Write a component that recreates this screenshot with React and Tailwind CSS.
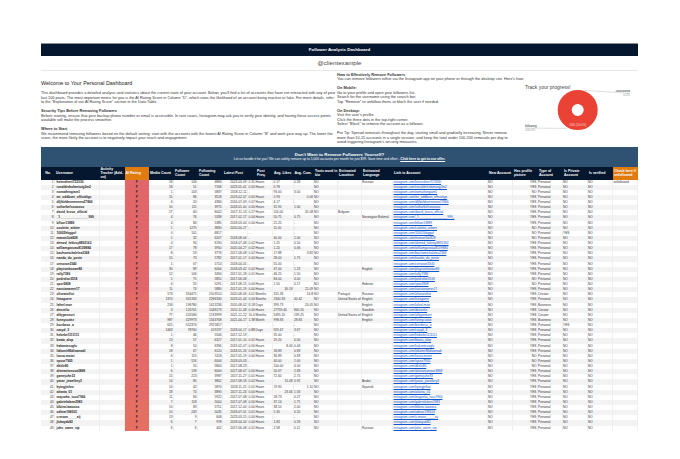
const cols =
  "grid grid-cols-[14px_44.5px_25px_24.5px_25px_24px_25px_25px_25px_20.5px_20.5px_24px_24px_31px_95px_25px_25px_25px_25px_25px_25px]";

const headers = [
  "No.",
  "Username",
  "Activity Tracker (Add-on)",
  "AI Rating",
  "Media Count",
  "Follower Count",
  "Following Count",
  "Latest Post",
  "Post Freq.",
  "Avg. Likes",
  "Avg. Com.",
  "Toxic word in bio",
  "Estimated Location",
  "Estimated Language",
  "Link to Account",
  "New Account",
  "Has profile picture",
  "Type of Account",
  "Is Private Account",
  "Is verified",
  "Check here if unfollowed",
];

// user|media|followers|following|date|freq|likes|com|location|language|hasPic|type|private
// a leading > means the value sits on the right of its cell
const raw = [
  "heinrafeeri723330|18|106|4866|2023-03-09|0.31 Hours|0.17|0.33|-|Russian|YES|Personal|NO",
  "ronaldinhofamtoig3m2|18|51|7168|2023-05-01|0.00 Hours|0.78|-|||YES|Personal|NO",
  "nomathingiam1|1|103|5837|2018-12-11|-|93.00|3.00|||NO|Personal|NO",
  "mr_oddboet_officialigs|15|86|3518|2023-02-07|0.00 Hours|0.93|>0.06|||YES|Personal|NO",
  "dfjfdzfdnnnnnnnn27866|6|20|4384|2016-07-09|0.07 Hours|4.17|-|||YES|Personal|NO",
  "sofiartkelsoooooo|10|111|3975|2018-01-00|0.00 Hours|31.90|1.00|||YES|Personal|NO",
  "david_kruva_official|17|60|6052|2017-11-13|0.27 Hours|116.00|>31.08|Belgium||YES|Personal|NO",
  "_1________________999_|4|76|5338|2017-02-17|0.00 Hours|50.75|0.75||Norwegian Bokmål|YES|Personal|NO",
  "bfloor13889|4|84|5385|2018-03-04|0.00 Hours|21.25|-|||YES|Personal|NO",
  "coolnite_arbiee|1|1275|3830|2020-04-27|-|11.00|-|||NO|Personal|NO",
  "10005hkggof|0|101|6817||-|-|-|||NO|Personal|YES",
  "manan3ok828|1|32|6207|2018-08-04|-|40.00|2.00|||NO|Personal|NO",
  "ahmed_fakiroy8892162|4|94|6190|2018-07-08|0.02 Hours|1.25|0.50|||YES|Personal|NO",
  "williamgonzao8139884|17|78|3950|2020-04-27|0.02 Hours|1.20|0.06|||YES|Personal|NO",
  "bachomichalelea2368|8|53|3776|2017-08-08|0.02 Hours|17.88|>3.82|||YES|Personal|NO",
  "nando_do_poste|15|73|5782|2017-01-17|0.00 Hours|28.00|1.75|||YES|Personal|NO",
  "cenovoe3340|1|67|5714|2018-04-01|-|55.00|-|||YES|Personal|NO",
  "playeonkoowe86|30|89|6064|2018-03-02|0.02 Hours|47.00|1.23||English|YES|Personal|NO",
  "rally7386|12|106|3494|2017-01-18|0.01 Hours|46.25|1.50|||YES|Personal|NO",
  "pedrofox3518|1|75|5855|2017-06-08|-|84.00|4.00|||NO|Personal|NO",
  "spor5808|6|55|5291|2017-08-15|0.00 Hours|1.50|0.17||Hebrew|NO|Personal|NO",
  "nassianamer17|11|74|5880|2017-01-19|0.00 Hours|>30.18|>21.09|||YES|Personal|NO",
  "oliveatofitsi|573|354471|1503510|2020-08-06|4.01 Months|315.33|>14.8|Portugal|Russian|YES|Creator|NO",
  "listogoere|1370|341333|2286330|2023-01-04|0.00 Months|2340.33|40.42|United States of A|English|YES|Personal|NO",
  "lafeel.moe|234|196780|1413236|2020-08-02|8.18 Days|393.73|>24.05||English|YES|Business|NO",
  "denzelio|3|126701|1048173|2012-11-08|0.00 Hours|27759.40|840.20||Swedish|YES|Creator|NO",
  "alltypesnort|77|241580|1743999|2021-12-22|10.0 Months|5495.20|139.25|United States of A|English|YES|Creator|NO",
  "funnycutiez|987|429973|1563768|2021-04-17|1.38 Month|998.83|28.83||English|YES|Business|NO",
  "burrbeca_a|625|552374|2921817||-|-|-|||YES|Personal|YES",
  "cacyd_3|1463|78760|419197|2018-04-17|0.88 Days|925.67|3.67|||YES|Personal|NO",
  "hebebe1111111|1|46|5506|2017-12-19|-|35.00|-|||YES|Personal|NO",
  "beata_alop|13|57|6327|2017-01-10|0.01 Hours|19.20|0.00|||YES|Personal|NO",
  "hakantezoglu|8|50|6396|2019-02-07|0.00 Hours|>8.44|0.44|||YES|Personal|NO",
  "lidiomir86dlownadi|18|67|6120|2018-01-26|0.00 Hours|18.83|0.83|||YES|Personal|NO",
  "lousa.motot|6|115|5118|2017-05-19|0.00 Hours|36.83|0.83|||NO|Personal|NO",
  "spuur7905|1|516|6004|2018-03-03|-|40.00|1.00|||NO|Personal|NO",
  "dkitle80|1|55|5800|2017-08-23|-|100.00|4.00|||NO|Personal|NO",
  "alineantonova3868|6|139|6000|2017-08-07|0.00 Hours|50.67|2.83|||YES|Personal|NO",
  "gamejuhe33|15|213|3987|2017-11-27|0.01 Hours|72.60|2.75|||YES|Personal|NO",
  "yasar_jewellery3|14|85|3802|2017-08-18|0.02 Hours|>15.08|0.92||Arabic|YES|Personal|NO",
  "hyingjinfoo|10|42|5870|2018-11-21|0.01 Hours|19.90|>1.10||Spanish|YES|Personal|NO",
  "atlanta_01|18|74|3890|2017-11-24|0.00 Hours|>23.06|1.56|||YES|Personal|NO",
  "mayorka_tuco7966|11|84|5922|2017-07-08|0.00 Hours|18.73|0.27|||YES|Personal|NO",
  "gabrielalann2983|7|118|5000|2017-07-08|0.00 Hours|37.14|1.71|||YES|Personal|NO",
  "blbiea.lawooca|10|83|5751|2017-12-00|0.00 Hours|38.10|2.00|||YES|Personal|NO",
  "odinar198103|10|243|5035|2018-07-01|0.01 Hours|5.30|0.20|||YES|Personal|NO",
  "u.moon_____aij|13|9|608|2023-03-15|0.00 Hours|-|-|||YES|Personal|NO",
  "jlokayab82|6|7|978|2018-04-04|0.00 Hours|1.83|0.33|||YES|Personal|NO",
  "john_owen_vip|6|6|402|2017-06-08|0.01 Hours|2.58|0.11||Russian|YES|Personal|NO",
];

const rows = raw.map((line) => line.split("|"));

const Cell = ({ children, className = "" }) => (
  <div className={`overflow-hidden whitespace-nowrap border-r border-[#efefef] ${className}`}>{children}</div>
);

const Stat = ({ value }) => {
  const right = value.startsWith(">");
  return <Cell className={right ? "text-right" : "pl-[0.5px]"}>{right ? value.slice(1) : value}</Cell>;
};

const Row = ({ row, index }) => {
  const [user, media, followers, following, date, freq, likes, com, location, language, hasPic, type, isPrivate] = row;
  return (
    <div
      className={`${cols} h-[5.14px] leading-[5.14px] text-[3.2px] text-[#333333] ${
        index % 2 === 0 ? "bg-white" : "bg-[#f3f3f3]"
      }`}
    >
      <Cell className="text-right pr-[0.5px]">{index + 1}</Cell>
      <Cell className="pl-[1.5px] font-bold text-[#222222]">{user}</Cell>
      <Cell></Cell>
      <Cell
        className={`text-center font-bold text-[#222222] border-none ${
          index > 42 ? "bg-[#e66f63]" : index > 21 ? "bg-[#e36a67]" : "bg-[#e0666a]"
        }`}
      >
        F
      </Cell>
      <Cell className="text-right pr-[0.5px]">{media}</Cell>
      <Cell className="text-right pr-[0.5px]">{followers}</Cell>
      <Cell className="text-right pr-[0.5px]">{following}</Cell>
      <Cell className="text-right pr-[0.5px]">{date}</Cell>
      <Cell className="pl-[0.5px]">{freq}</Cell>
      <Stat value={likes} />
      <Stat value={com} />
      <Cell>NO</Cell>
      <Cell>{location}</Cell>
      <Cell>{language}</Cell>
      <Cell className="pl-[0.5px] text-[#1155cc] underline">{`instagram.com/${user}`}</Cell>
      <Cell>NO</Cell>
      <Cell className="text-right pr-[0.5px]">{hasPic}</Cell>
      <Cell>{type}</Cell>
      <Cell>{isPrivate}</Cell>
      <Cell>NO</Cell>
      <Cell className="pl-[0.5px]">{index === 0 ? "unfollowed" : ""}</Cell>
    </div>
  );
};

const Chart = () => (
  <svg width="113" height="56" viewBox="0 0 113 56" className="block">
    <circle cx="52.7" cy="20" r="13" fill="none" stroke="#ea4335" strokeWidth="14" />
    <path d="M58 0.3 L105 3.3" stroke="#bdbdbd" strokeWidth="0.5" fill="none" />
    <path d="M0 38 L41.7 38.4" stroke="#bdbdbd" strokeWidth="0.5" fill="none" />
    <text x="105" y="2" textAnchor="end" fontSize="3" fill="#333333">unfollowed</text>
    <text x="105" y="5.6" textAnchor="end" fontSize="3" fill="#9e9e9e">0.0%</text>
    <text x="0" y="36.8" fontSize="3" fill="#333333">following</text>
    <text x="0" y="40.6" fontSize="3" fill="#9e9e9e">100.0%</text>
    <text x="52.7" y="36" textAnchor="middle" fontSize="2.6" fill="#ffd9d4">1000 (100.0%)</text>
  </svg>
);

export default function App() {
  return (
    <div className="min-h-[459px] bg-white pt-[43px] pl-[41px] font-['Liberation_Sans',Arial,sans-serif]">
      <div className="w-[597px]">
        <div className="flex h-[13px] items-center justify-center border-t border-[#8a8f94] bg-[#04172e] text-[4.4px] font-bold text-white">
          Follower Analysis Dashboard
        </div>
        <div className="flex h-[14.5px] items-center justify-center border-b border-[#e8e8e8] text-[6.2px] text-[#444444]">
          @clientexample
        </div>

        <div className="flex h-[76px] text-[3.85px] leading-[4.5px] text-[#333333]">
          <div className="w-[296px] shrink-0 pt-[9px]">
            <h1 className="text-[5.4px] leading-[6px] text-[#222222]">Welcome to Your Personal Dashboard</h1>
            <p className="mt-[5.5px]">
              This dashboard provides a detailed analysis and statistics about the current state of your account. Below,
              you'll find a list of accounts that have not interacted with any of your last 100 posts. The most
              important metric for you is the AI Rating Score in Column "D", which rates the likelihood of an account
              being inactive or fake. For more details, refer to the "Explanation of our AI Rating Score" section in the
              Data Table.
            </p>
            <p className="mt-[4.5px] font-bold">Security Tips Before Removing Followers</p>
            <p>
              Before starting, ensure that your backup phone number or email is accessible. In rare cases, Instagram may
              ask you to verify your identity, and having these access points available will make the process smoother.
            </p>
            <p className="mt-[4.5px] font-bold">Where to Start</p>
            <p>
              We recommend removing followers based on the default sorting: start with the accounts with the lowest AI
              Rating Score in Column "B" and work your way up. The lower the score, the more likely the account is to
              negatively impact your reach and engagement.
            </p>
          </div>

          <div className="ml-[0px] w-[179px] shrink-0 pt-[2px]">
            <p className="font-bold">How to Effectively Remove Followers</p>
            <p className="whitespace-nowrap">
              You can remove followers either via the Instagram app on your phone or through the desktop site. Here's how:
            </p>
            <p className="mt-[4.5px] font-bold">On Mobile:</p>
            <p>Go to your profile and open your followers list.</p>
            <p>Search for the username using the search bar.</p>
            <p>Tap "Remove" to unfollow them, or block the user if needed.</p>
            <p className="mt-[4.5px] font-bold">On Desktop:</p>
            <p>Visit the user's profile.</p>
            <p>Click the three dots in the top-right corner.</p>
            <p>Select "Block" to remove the account as a follower.</p>
            <p className="mt-[4.5px]">
              <span>Pro Tip: </span>Spread removals throughout the day, starting small and gradually increasing. Never
              remove more than 10-15 accounts in a single session, and keep the total under 100-200 removals per day to
              avoid triggering Instagram's security measures.
            </p>
          </div>

          <div className="ml-[9px] min-w-0 flex-1 pt-[13px]">
            <p className="text-[5px] leading-[6px] text-[#444444]">Track your progress!</p>
            <Chart />
          </div>
        </div>

        <div className="flex h-[20px] flex-col items-center justify-center bg-[#2f5172] text-white">
          <p className="text-[4.4px] font-bold leading-[5px]">Don't Want to Remove Followers Yourself?</p>
          <p className="text-[3.3px] leading-[4px]">
            Let us handle it for you! We can safely remove up to 5,000 accounts per month for just $99. Save time and
            effort - <span className="font-bold underline">Click here to get to our offer.</span>
          </p>
        </div>

        <div className={`${cols} h-[13px] bg-[#04172e] text-[3.5px] font-bold leading-[4.1px] text-white`}>
          {headers.map((label, i) => (
            <div
              key={label}
              className={`flex items-center ${i === 0 ? "justify-center" : "pl-[1px]"} ${
                i === 3 || i === 20 ? "bg-[#e07b10]" : ""
              } ${i === 8 ? "pl-[9px]" : ""}`}
            >
              {label}
            </div>
          ))}
        </div>

        {rows.map((row, i) => (
          <Row key={row[0]} row={row} index={i} />
        ))}
      </div>
    </div>
  );
}
